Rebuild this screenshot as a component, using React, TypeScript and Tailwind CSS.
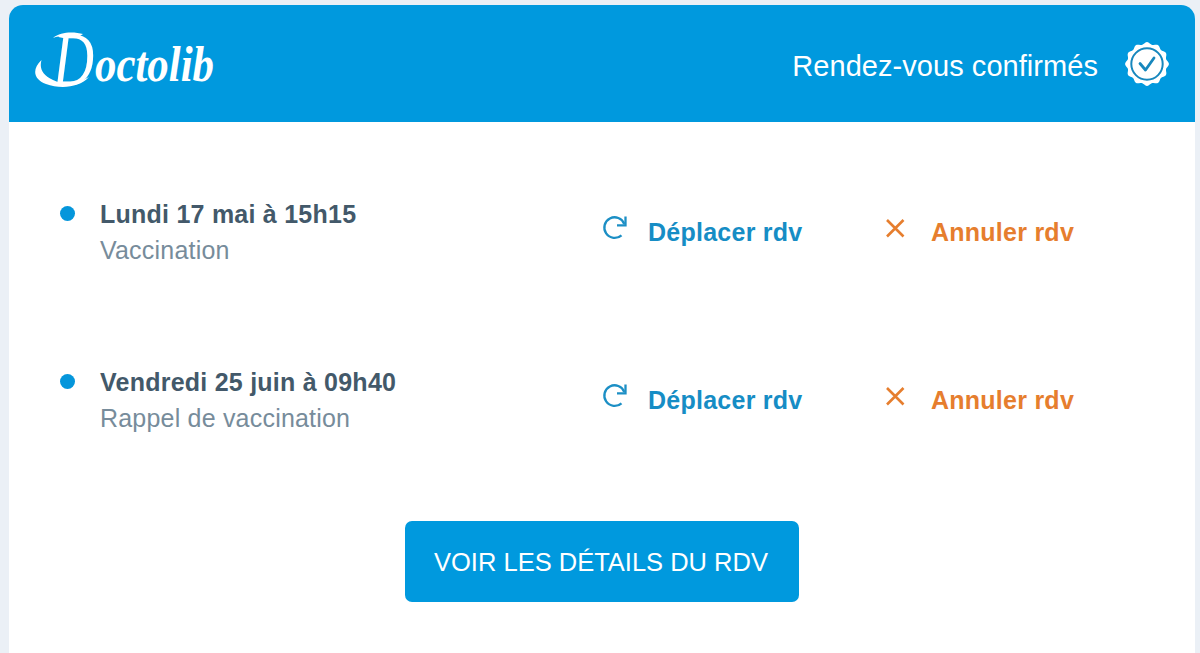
interface Appointment {
  date: string;
  reason: string;
}

const appointments: Appointment[] = [
  { date: 'Lundi 17 mai à 15h15', reason: 'Vaccination' },
  { date: 'Vendredi 25 juin à 09h40', reason: 'Rappel de vaccination' },
];

// Outline of the confirmation seal: a circle whose radius waves twelve times
const sealPoints = Array.from({ length: 144 }, (_, i) => {
  const angle = (i / 144) * Math.PI * 2;
  const radius = 20.8 + 1.1 * Math.cos(angle * 12);
  return `${(radius * Math.cos(angle)).toFixed(2)},${(radius * Math.sin(angle)).toFixed(2)}`;
}).join(' ');

function Logo() {
  return (
    <svg
      width="220"
      height="110"
      viewBox="0 0 220 110"
      fill="#fff"
      fontFamily="'Liberation Serif', serif"
      fontStyle="italic"
      fontWeight="bold"
      role="img"
      aria-label="Doctolib"
    >
      {/* swashes around the initial */}
      <path d="M8.500 51C-1 60 0 70 13 75C27 80 46 79 56 68C46 74 32 77 20 71C10 66 6 60 8.500 51Z" />
      <path d="M20 29C28 22 42 23 50 25L44 29C37 27 28 26 20 29Z" />
      <text x="20" y="76" fontSize="76" fontWeight="normal" textLength="41" lengthAdjust="spacingAndGlyphs">D</text>
      <text x="62" y="71.500" fontSize="51" textLength="119" lengthAdjust="spacingAndGlyphs">octolib</text>
    </svg>
  );
}

function ConfirmedBadge() {
  return (
    <svg width="44" height="44" viewBox="-22 -22 44 44" fill="none">
      <polygon points={sealPoints} fill="#fff" />
      <circle r="15.700" stroke="#1787bd" strokeWidth="2" />
      <path d="M-7 -.500L-1.500 6L7 -6" stroke="#1787bd" strokeWidth="2.800" strokeLinecap="round" strokeLinejoin="round" />
    </svg>
  );
}

function RefreshIcon() {
  return (
    <svg width="26" height="26" viewBox="0 0 26 26" fill="none" stroke="#1c8fc5" strokeWidth="2.300">
      <path d="M19.500 21.300A10.300 10.300 0 1 1 22.300 10" />
      <path d="M23.500 2.500V11.300H15" />
    </svg>
  );
}

function CrossIcon() {
  return (
    <svg width="20" height="20" viewBox="0 0 20 20" fill="none" stroke="#e67e2e" strokeWidth="2.600">
      <path d="M2 2L18.500 18.500M18.500 2L2 18.500" />
    </svg>
  );
}

function AppointmentRow({ date, reason }: Appointment) {
  return (
    <li className="flex h-[168px] items-start">
      <span className="mt-[17px] size-[15px] shrink-0 rounded-full bg-[#0596db]" />
      <div className="ml-[25px] w-[502px] pt-[7px] text-[25px] leading-9">
        <p className="font-bold tracking-[0.24px] text-[#43596a]">{date}</p>
        <p className="tracking-[0.2px] text-[#778c9b]">{reason}</p>
      </div>
      <button className="flex w-[283px] items-start pt-[25px] text-[25px] leading-9 font-bold tracking-[0.25px] text-[#168dc5]">
        <RefreshIcon />
        <span className="ml-[20px]">Déplacer rdv</span>
      </button>
      <button className="flex items-start pt-[25px] text-[25px] leading-9 font-bold tracking-[0.25px] text-[#e67e2e]">
        <span className="pt-[4px]">
          <CrossIcon />
        </span>
        <span className="ml-[26px]">Annuler rdv</span>
      </button>
    </li>
  );
}

export default function App() {
  return (
    <div className="h-[653px] overflow-hidden bg-[#ebf0f6] pt-[5px] pr-[5px] pl-[9px] font-['Liberation_Sans',Arial,sans-serif]">
      <main className="h-full overflow-hidden rounded-t-[14px] bg-white">
        <header className="flex h-[117px] items-center bg-[#0099de] pr-[26px] pl-[24px] text-white">
          <Logo />
          <h1 className="mt-[4px] ml-auto text-[29px] leading-9 tracking-[0.05px]">Rendez-vous confirmés</h1>
          <div className="ml-[27px]">
            <ConfirmedBadge />
          </div>
        </header>
        <ul className="pt-[67px] pl-[51px]">
          {appointments.map((appointment) => (
            <AppointmentRow key={appointment.date} {...appointment} />
          ))}
        </ul>
        <button className="mt-[-4px] ml-[396px] h-[81px] w-[394px] rounded-[7px] bg-[#0099de] pt-[2px] pr-[2px] text-[25.500px] text-white">
          VOIR LES DÉTAILS DU RDV
        </button>
      </main>
    </div>
  );
}
